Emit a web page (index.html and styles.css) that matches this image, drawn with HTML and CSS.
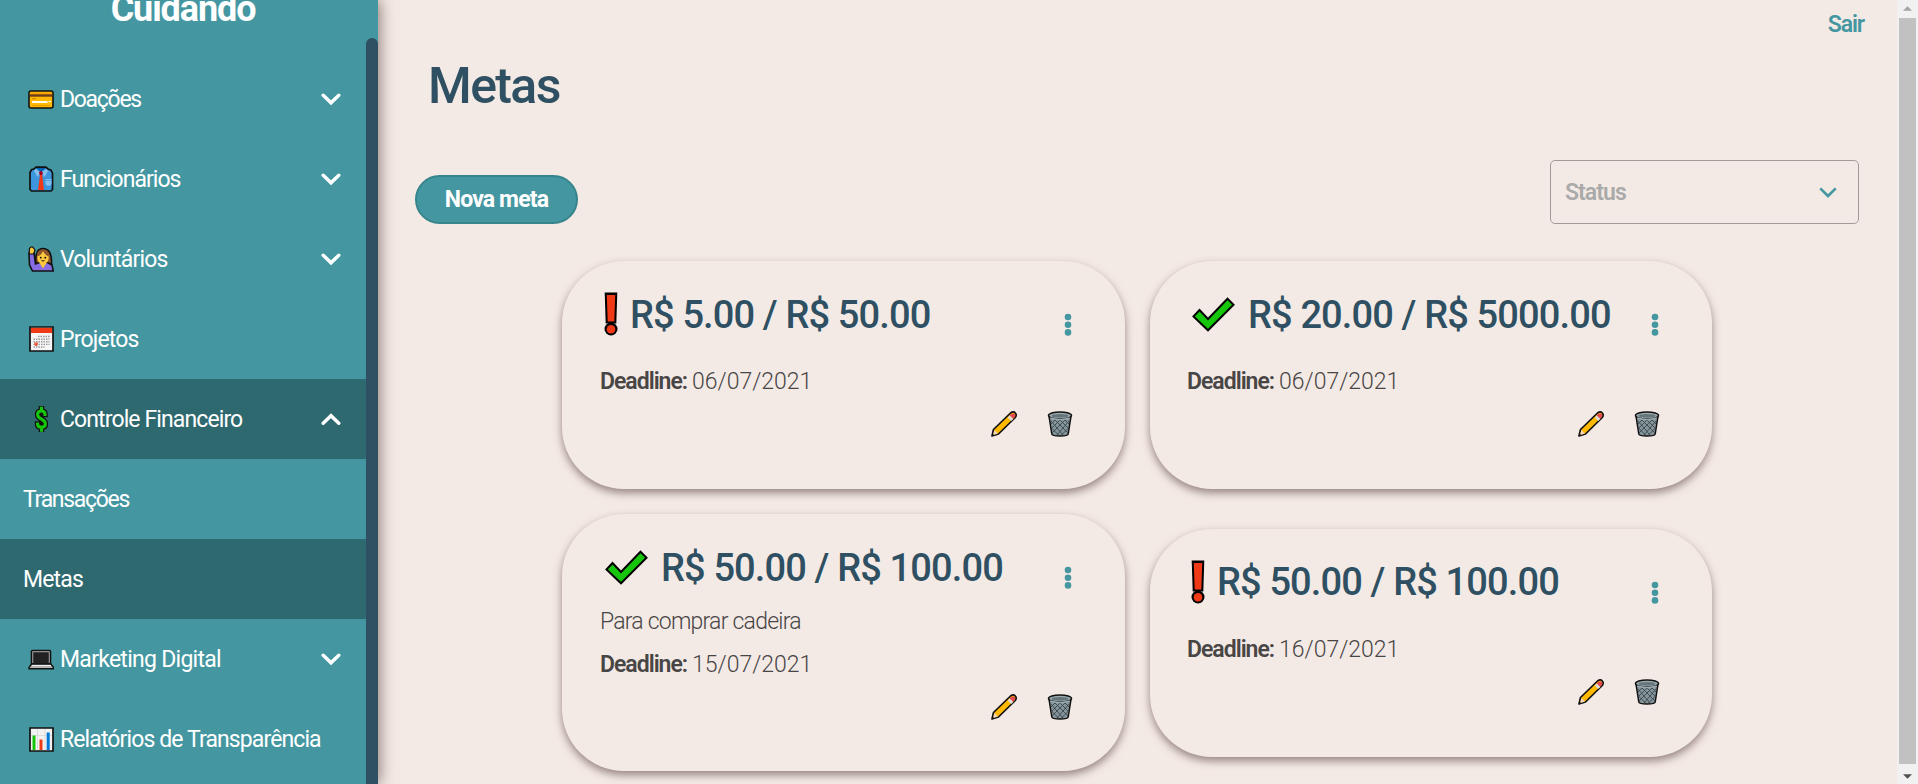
FILE: index.html
```html
<!DOCTYPE html>
<html lang="pt-BR">
<head>
<meta charset="utf-8">
<title>Cuidando - Metas</title>
<link rel="stylesheet" href="styles.css">
</head>
<body>
<svg class="sprite" aria-hidden="true">
  <symbol id="down" viewBox="0 0 20 13"><path d="M2.2 2.2 10 9.8l7.800-7.600" fill="none" stroke="currentColor" stroke-width="3.400" stroke-linecap="round"/></symbol>
  <symbol id="up" viewBox="0 0 20 13"><path d="M2.200 10.300 10 2.700l7.800 7.600" fill="none" stroke="currentColor" stroke-width="3.400" stroke-linecap="round"/></symbol>
  <symbol id="card" viewBox="0 0 26 26">
    <rect x="1" y="5" width="24" height="17" rx="2" fill="#ffb900" stroke="#111" stroke-width="1.600"/>
    <path d="M1.800 7.300h22.400" stroke="#f7a400" stroke-width="1.400"/><path d="M1.800 9.500h22.400" stroke="#6e3b1e" stroke-width="2.400"/>
    <path d="M4 12.700h4" stroke="#c98600"/><path d="M4 16h15.500" stroke="#fff" stroke-width="1.900"/><path d="M20.500 15.600h2.500" stroke="#fff" stroke-width="1.200"/><path d="M4 19.500h18" stroke="#e09a00" stroke-width=".8"/>
  </symbol>
  <symbol id="shirt" viewBox="0 0 26 26">
    <path d="M8 1.200h10l1.500 1.500 3.500 1.500 1.500 3V23.500L23 25H3.500L2 23.500V6.500L3.500 3.800 6.500 2.700Z" fill="#3b96dd" stroke="#111" stroke-width="1.700"/>
    <path d="M8 2h10l-5 4.500Z" fill="#0063b1"/><path d="M7.500 2.700 13 6.500 9.500 11 6 5Zm11 0L13 6.500 16.500 11 20 5Z" fill="#83beec"/>
    <path d="m11 6 2-1 2 1.500-.8 2.500h-2.500Z" fill="#a4001d"/><path d="M12 9h2.200L16 24h-6Z" fill="#f03a17"/><path d="M17.500 13h6v5l-1.500 1.800h-3L17.500 18Z" fill="#83beec"/><path d="M17.500 14.500h6" stroke="#3b96dd" stroke-width=".7"/>
  </symbol>
  <symbol id="person" viewBox="0 0 26 26">
    <path d="M8 18c-1-12 2-15.500 7-15.500S24 6 23.500 18Z" fill="#8e562e" stroke="#111" stroke-width="1.600"/>
    <path d="M1 7h5l1.500 11 4-1.500h8l4.500 2.500 1.300 6H4.500L1.500 19Z" fill="#886ce4" stroke="#111" stroke-width="1.600"/>
    <path d="M1.300 8V3Q3-.3 5 1.300l2 2.700L5.500 8Z" fill="#ffc83d" stroke="#111" stroke-width="1.200"/>
    <path d="M11.500 17h7l-3.500 5.500Z" fill="#ffc83d"/><path d="M9.300 12Q9.300 6 15 5.500q5.700.5 5.700 6.500 0 5.500-5.700 5.500T9.300 12Z" fill="#ffc83d"/>
    <path d="M9.300 10.500Q14 9 15 5q2 4.500 5.700 5.500L19 5l-5-1.500L9 7Z" fill="#8e562e"/><circle cx="12.700" cy="11.700" r=".9"/><circle cx="17.300" cy="11.700" r=".9"/><path d="M13 14.200h4q-2 2.600-4 0Z" fill="#222"/>
  </symbol>
  <symbol id="calendar" viewBox="0 0 26 26">
    <path d="M2 1h23v24H2Z" fill="#f5f5f5" stroke="#111" stroke-width="1.700"/><path d="M3 2h21v5H3Z" fill="#f03a17"/>
    <path d="M10 10.500h11.500M5.500 13.200h16M5.500 15.800h16M5.500 18.400h16M5.500 21h11" stroke="#999" stroke-width="1.400" stroke-dasharray="1.500 1"/><path d="M6.200 16.500h4l-1 3.500h-2.200Z" fill="#f03a17" opacity=".8"/>
  </symbol>
  <symbol id="dollar" viewBox="0 0 26 26">
    <path d="M13.500 2.200v22M17 8.500q0-3.500-3.700-3.500T9.600 8.800q0 2.200 3.900 4.400t3.900 4.600q0 3.500-3.900 3.500T9.600 18" fill="none" stroke="#111" stroke-width="5.600" stroke-linecap="square"/>
    <path d="M13.500 2.200V5m0 16v3.200M17 8.500q0-3.500-3.700-3.500T9.600 8.800q0 2.200 3.900 4.400t3.900 4.600q0 3.500-3.900 3.500T9.600 18" fill="none" stroke="#16c60c" stroke-width="3.100" stroke-linecap="square"/>
  </symbol>
  <symbol id="laptop" viewBox="0 0 26 26">
    <path d="M4.500 4.500h17q1 0 1 1V18h-19V5.500q0-1 1-1Z" fill="#bbb" stroke="#111" stroke-width="1.600"/><path d="M5.200 6.200h15.600v11H5.200Z" fill="#222"/>
    <path d="m3.500 18-2.500 3.500v1.200h24.500v-1.200L22.800 18Z" fill="#b5b5b5" stroke="#111" stroke-width="1.400"/><path d="M4 19.500h19" stroke="#eee"/>
  </symbol>
  <symbol id="chart" viewBox="0 0 26 26">
    <path d="M2 2h23v23H2Z" fill="#f2f2f2" stroke="#111" stroke-width="1.700"/><path d="M3 9.500h21M9.500 3v21M17 3v21" stroke="#ddd"/>
    <path d="M4.500 9.500h3V24h-3Z" fill="#16c60c"/><path d="M11.500 13.500h3V24h-3Z" fill="#f03a17"/><path d="M18.700 6.500h3V24h-3Z" fill="#0078d7"/>
  </symbol>
  <symbol id="alert" viewBox="0 0 14 44"><path d="M.7.500h12.600l-1 31H1.700Z" fill="#000"/><path d="M2.800 3h8.400l-.9 26.500H3.700Z" fill="#f03a17"/><circle cx="7" cy="37" r="6.500" fill="#000"/><circle cx="7" cy="37.300" r="4.300" fill="#f03a17"/></symbol>
  <symbol id="check" viewBox="0 0 43 35"><path d="m1.500 19.500 6-6.500 8.500 9L35.500 1.800l6 6L16 33.300Z" fill="#16c60c" stroke="#000" stroke-width="2"/></symbol>
  <symbol id="pencil" viewBox="0 0 26 26">
    <path d="M1 25 2.500 18.500 19.500 2q3-2 4.800 0 1.800 2 0 4.500L7.500 23Z" fill="#ffb900" stroke="#111" stroke-width="1.700" stroke-linejoin="round"/>
    <path d="m2 24.200 1.300-5.300L7 22.600Z" fill="#f5d5b8"/><path d="m16.700 6.500 2.200-2 3.500 3.500-2.200 2Z" fill="#ddd"/><path d="m18.700 4.500 1.500-1.500q2-1.200 3.500 0 1.200 1.500 0 3L22.300 7.800Z" fill="#e74856"/><path d="m1.300 24.800.6-2 1.400 1.400Z" fill="#111"/>
  </symbol>
  <symbol id="trash" viewBox="0 0 26 26">
    <path d="M2.200 6.500 4.800 23q.3 2 8.200 2t8.200-2L23.800 6.500Z" fill="#84949a" stroke="#111" stroke-width="1.500"/>
    <path d="M4 10l12 14M4.500 17l7 7M7 8l14 14M12 8l9 9M17 8l5 5M22 10 10 24M21.500 17l-7 7M19 8 5 22M14 8l-9 9M9 8l-5 5" stroke="#39464a" stroke-width=".9"/>
    <ellipse cx="13" cy="4.500" rx="11.500" ry="3.500" fill="#9aabb0" stroke="#111" stroke-width="1.500"/><ellipse cx="13" cy="4.800" rx="8.500" ry="1.800" fill="#65757a"/><path d="M3.200 7q10 3 19.600 0" stroke="#9aabb0" stroke-width="1.500" fill="none"/>
  </symbol>
  <symbol id="dots" viewBox="0 0 8 24"><circle cx="4" cy="4" r="3.300"/><circle cx="4" cy="11.700" r="3.300"/><circle cx="4" cy="19.400" r="3.300"/></symbol>
</svg>
<div class="app">
  <aside class="sidebar">
    <nav class="nav">
      <div class="brand"><span>Cuidando</span></div>
      <a class="item ls-d"><svg class="ico"><use href="#card"/></svg><span>Doações</span><svg class="chev"><use href="#down"/></svg></a>
      <a class="item ls-c"><svg class="ico"><use href="#shirt"/></svg><span>Funcionários</span><svg class="chev"><use href="#down"/></svg></a>
      <a class="item"><svg class="ico"><use href="#person"/></svg><span>Voluntários</span><svg class="chev"><use href="#down"/></svg></a>
      <a class="item"><svg class="ico"><use href="#calendar"/></svg><span>Projetos</span></a>
      <a class="item active ls-f"><svg class="ico"><use href="#dollar"/></svg><span>Controle Financeiro</span><svg class="chev"><use href="#up"/></svg></a>
      <a class="item sub ls-e"><span>Transações</span></a>
      <a class="item sub active"><span>Metas</span></a>
      <a class="item ls-a"><svg class="ico"><use href="#laptop"/></svg><span>Marketing Digital</span><svg class="chev"><use href="#down"/></svg></a>
      <a class="item ls-f"><svg class="ico"><use href="#chart"/></svg><span>Relatórios de Transparência</span></a>
    </nav>
    <div class="side-track"><div class="side-thumb"></div></div>
  </aside>
  <main class="main">
    <header class="top"><a class="logout">Sair</a></header>
    <h1 class="title">Metas</h1>
    <div class="toolbar">
      <button class="new">Nova meta</button>
      <div class="select"><span>Status</span><svg viewBox="0 0 16 10"><path d="m1 1.200 7 7 7-7" fill="none" stroke="currentColor" stroke-width="2.400"/></svg></div>
    </div>
    <section class="grid">
      <article class="goal">
        <div class="head"><svg class="alert"><use href="#alert"/></svg><h2>R$ 5.00 / R$ 50.00</h2><svg class="dots"><use href="#dots"/></svg></div>
        <p class="line gap"><b>Deadline:</b><span class="date">06/07/2021</span></p>
        <div class="actions"><svg><use href="#pencil"/></svg><svg><use href="#trash"/></svg></div>
      </article>
      <article class="goal">
        <div class="head"><svg class="check"><use href="#check"/></svg><h2>R$ 20.00 / R$ 5000.00</h2><svg class="dots"><use href="#dots"/></svg></div>
        <p class="line gap"><b>Deadline:</b><span class="date">06/07/2021</span></p>
        <div class="actions"><svg><use href="#pencil"/></svg><svg><use href="#trash"/></svg></div>
      </article>
      <article class="goal">
        <div class="head"><svg class="check"><use href="#check"/></svg><h2>R$ 50.00 / R$ 100.00</h2><svg class="dots"><use href="#dots"/></svg></div>
        <p class="line desc">Para comprar cadeira</p>
        <p class="line"><b>Deadline:</b><span class="date">15/07/2021</span></p>
        <div class="actions"><svg><use href="#pencil"/></svg><svg><use href="#trash"/></svg></div>
      </article>
      <article class="goal">
        <div class="head"><svg class="alert"><use href="#alert"/></svg><h2>R$ 50.00 / R$ 100.00</h2><svg class="dots"><use href="#dots"/></svg></div>
        <p class="line gap"><b>Deadline:</b><span class="date">16/07/2021</span></p>
        <div class="actions"><svg><use href="#pencil"/></svg><svg><use href="#trash"/></svg></div>
      </article>
    </section>
  </main>
  <div class="scrollbar"><svg class="arrow" viewBox="0 0 10 5"><path d="M0 5 5 0l5 5Z" fill="#a3a3a3"/></svg><div class="thumb"></div><svg class="arrow" viewBox="0 0 10 5"><path d="m0 0 5 5 5-5Z" fill="#505050"/></svg></div>
</div>
</body>
</html>
```

FILE: styles.css
```css
* { box-sizing: border-box; }
body { margin: 0; height: 784px; overflow: hidden; background: #f4eae5; font-family: Roboto, "Liberation Sans", sans-serif; font-size: 23px; }
h1, h2, p { margin: 0; }
svg { flex: none; display: block; }
.sprite { position: absolute; width: 0; height: 0; }
.app { display: flex; height: 784px; }

.sidebar { display: flex; width: 378px; flex: none; background: #4497a1; box-shadow: 2px 0 14px rgba(60, 35, 35, .55); }
.nav { width: 366px; color: #fff; }
.brand { height: 59px; display: flex; justify-content: center; font-size: 36px; font-weight: 700; letter-spacing: -1.100px; line-height: 42px; }
.brand span { margin-top: -12px; }
.item { display: flex; align-items: center; height: 80px; padding: 0 25px 0 28px; letter-spacing: -.83px; white-space: nowrap; }
.item span { flex: 1; padding-top: 1px; }
.sub { padding-left: 23px; }
.active { background: #2f6970; }
.ls-a { letter-spacing: -.73px; }
.ls-c { letter-spacing: -.98px; }
.ls-d { letter-spacing: -1.300px; }
.ls-e { letter-spacing: -1.300px; }
.ls-f { letter-spacing: -.89px; }
.ico { width: 26px; height: 26px; margin-right: 6px; }
.chev { width: 20px; height: 13px; }
.side-track { width: 12px; padding-top: 38px; }
.side-thumb { height: 760px; border-radius: 6px; background: #2e5062; }

.main { flex: 1; }
.top { height: 48px; display: flex; justify-content: flex-end; padding: 11px 33px 0 0; line-height: 27px; }
.logout { color: #4497a1; font-weight: 600; letter-spacing: -1.100px; }
.title { margin-left: 50px; height: 76px; line-height: 76px; font-size: 50px; font-weight: 500; letter-spacing: -1.600px; color: #2e5062; }
.toolbar { display: flex; justify-content: space-between; align-items: flex-end; height: 100px; padding: 0 38px 0 37px; }
.new { width: 163px; height: 49px; border: 2px solid #37858c; border-radius: 25px; background: #4497a1; color: #fff; font: 700 23px Roboto, sans-serif; letter-spacing: -.85px; padding: 0; }
.select { display: flex; align-items: center; justify-content: space-between; width: 309px; height: 64px; padding: 0 21px 0 14px; border: 1px solid #a49a9a; border-radius: 5px; color: #aaa; font-weight: 600; letter-spacing: -.95px; }
.select svg { width: 18px; height: 11px; color: #4497a1; }

.grid { display: grid; grid-template-columns: 563px 562px; column-gap: 25px; row-gap: 25px; align-items: center; margin: 37px 0 0 184px; }
.goal { height: 228px; border-radius: 62px; padding: 30px 52px 0 38px; color: #484545; box-shadow: 0 4px 8px rgba(75, 50, 50, .55); }
.goal:nth-child(even) { padding-left: 37px; }
.goal:nth-child(3) { height: 257px; }
.head { display: flex; align-items: center; height: 46px; color: #2e5062; }
.head h2 { flex: 1; padding-top: 1px; font-size: 38px; font-weight: 500; letter-spacing: -.86px; white-space: nowrap; }
.alert { width: 14px; height: 44px; margin: 0 12px 0 4px; }
.check { width: 43px; height: 35px; margin: 0 13px 0 5px; }
.dots { width: 8px; height: 24px; fill: #4497a1; margin: 22px 1px 0 0; }
.line { display: flex; height: 43px; line-height: 44px; margin: 0; font-weight: 300; }
.line.gap { margin-top: 23px; }
.line.desc { margin-top: 10px; letter-spacing: -.77px; }
.line b { font-weight: 600; letter-spacing: -1px; width: 92px; }
.date { letter-spacing: 0; }
.actions { display: flex; justify-content: flex-end; gap: 30px; margin-top: 8px; }
.actions svg { width: 26px; height: 26px; }

.scrollbar { width: 21px; flex: none; background: #f1f1f1; display: flex; flex-direction: column; align-items: center; padding: 6px 0 5px; }
.arrow { width: 9px; height: 5px; }
.thumb { width: 17px; height: 746px; margin: 7px 0 10px; flex: none; background: #c1c1c1; }
```
